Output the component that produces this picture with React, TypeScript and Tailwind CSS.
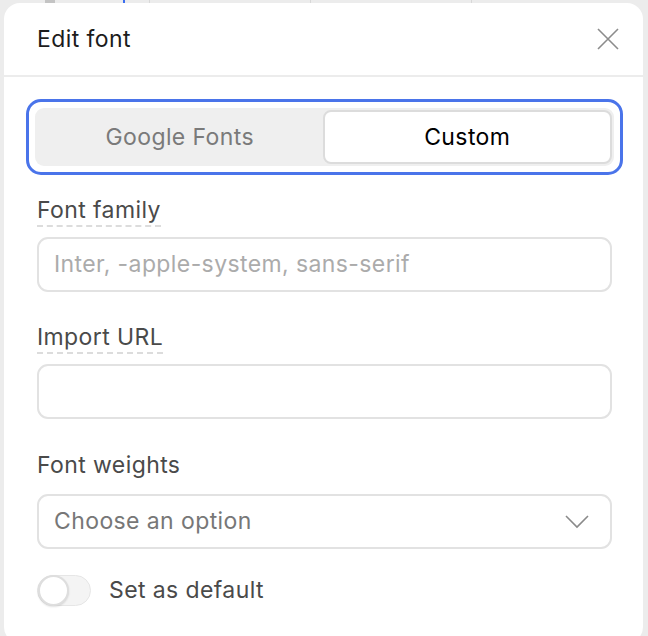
import { useState } from "react";

const font = { fontFamily: "Inter, 'Noto Sans', sans-serif" };

function Field({ label, dashed, children }: { label: string; dashed?: boolean; children: React.ReactNode }) {
  return (
    <div className="flex flex-col">
      <div className="flex">
        <span
          className={
            "text-[23px] tracking-[0.4px] leading-[28px] text-[#4a4a4a] border-b-2 pb-[1px] " +
            (dashed ? "border-dashed border-[#dcdcdc]" : "border-transparent")
          }
        >
          {label}
        </span>
      </div>
      <div className="mt-[10px]">{children}</div>
    </div>
  );
}

export default function App() {
  const [tab, setTab] = useState<"google" | "custom">("custom");
  const [isDefault, setIsDefault] = useState(false);

  return (
    <div className="w-[648px] h-[636px] bg-[#ececec] overflow-hidden relative" style={font}>
      {/* faint content behind the modal */}
      <div className="absolute top-0 left-0 right-0 h-[4px] flex">
        <div className="ml-[45px] w-[10px] bg-[#c4c4c4]" />
        <div className="ml-[68px] w-[2px] bg-[#3b6ef0]" />
        <div className="ml-[24px] w-[1px] bg-[#d8d8d8]" />
        <div className="ml-[160px] w-[1px] bg-[#d8d8d8]" />
        <div className="ml-[160px] w-[1px] bg-[#d8d8d8]" />
      </div>

      <div className="absolute left-[4px] top-[3px] w-[639px] h-[640px] bg-white rounded-[16px] flex flex-col">
        {/* header */}
        <div className="h-[74px] flex items-center justify-between pl-[33px] pr-[22px] border-b-2 border-[#ececec]">
          <h2 className="text-[23px] tracking-[0.4px] text-[#1c1c1c] font-normal">Edit font</h2>
          <button className="w-[26px] h-[26px] flex items-center justify-center text-[#8c8c8c]">
            <svg width="22" height="22" viewBox="0 0 22 22" fill="none" stroke="currentColor" strokeWidth="1.6">
              <path d="M1 1L21 21M21 1L1 21" />
            </svg>
          </button>
        </div>

        <div className="flex flex-col pl-[33px] pr-[31px] pt-[22px]">
          {/* segmented control with focus ring */}
          <div className="-mx-[11px] rounded-[15px] border-[3px] border-[#4a74ea] p-[6px]">
            <div className="flex bg-[#efefef] rounded-[9px] p-[2px] h-[58px]">
              <button
                onClick={() => setTab("google")}
                className={
                  "flex-1 rounded-[8px] text-[23px] tracking-[0.4px] " +
                  (tab === "google" ? "bg-white border-2 border-[#dcdcdc] text-black" : "text-[#7a7a7a]")
                }
              >
                Google Fonts
              </button>
              <button
                onClick={() => setTab("custom")}
                className={
                  "flex-1 rounded-[8px] text-[23px] tracking-[0.4px] " +
                  (tab === "custom" ? "bg-white border-2 border-[#dcdcdc] text-black" : "text-[#7a7a7a]")
                }
              >
                Custom
              </button>
            </div>
          </div>

          <div className="mt-[21px] flex flex-col gap-[31px]">
            <Field label="Font family" dashed>
              <div className="w-full h-[55px] rounded-[11px] border-2 border-[#e2e2e2] pl-[15px] pr-[15px] flex items-center">
                <input
                  placeholder="Inter, -apple-system, sans-serif"
                  className="w-full bg-transparent text-[23px] tracking-[0.4px] placeholder:text-[#ababab] outline-none"
                />
              </div>
            </Field>

            <Field label="Import URL" dashed>
              <div className="w-full h-[55px] rounded-[11px] border-2 border-[#e2e2e2] pl-[15px] pr-[15px] flex items-center">
                <input className="w-full bg-transparent text-[23px] tracking-[0.4px] outline-none" />
              </div>
            </Field>

            <div className="mt-[1px]">
              <Field label="Font weights">
                <div className="mt-[2px] w-full h-[55px] rounded-[11px] border-2 border-[#e2e2e2] pl-[15px] pr-[21px] flex items-center justify-between">
                  <span className="text-[23px] tracking-[0.4px] text-[#777777]">Choose an option</span>
                  <svg width="24" height="14" viewBox="0 0 24 14" fill="none" stroke="#8a8a8a" strokeWidth="1.6">
                    <path d="M1 1L12 12L23 1" />
                  </svg>
                </div>
              </Field>
            </div>
          </div>

          <div className="mt-[24px] flex items-center gap-[18px]">
            <button
              onClick={() => setIsDefault(!isDefault)}
              className="relative w-[54px] h-[31px] rounded-full bg-[#f4f4f4] border border-[#e6e6e6]"
            >
              <span className="absolute left-0 top-[-1px] w-[31px] h-[31px] rounded-full bg-white border-2 border-[#dedede] shadow-[0_1px_2px_rgba(0,0,0,0.12)]" />
            </button>
            <span className="text-[23px] tracking-[0.4px] text-[#4a4a4a]">Set as default</span>
          </div>
        </div>
      </div>
    </div>
  );
}
